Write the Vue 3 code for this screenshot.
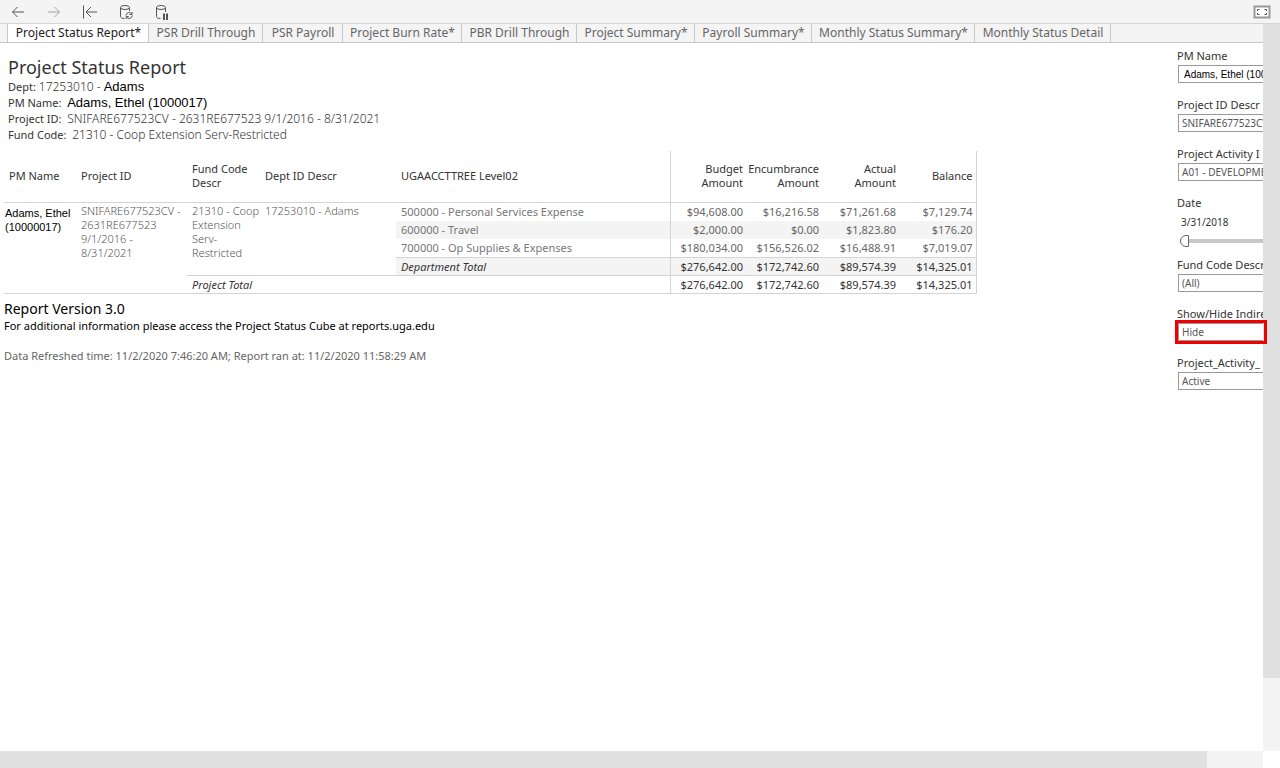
<script setup>
import { ref } from 'vue'

const tabs = [
  'Project Status Report*', 'PSR Drill Through', 'PSR Payroll', 'Project Burn Rate*',
  'PBR Drill Through', 'Project Summary*', 'Payroll Summary*', 'Monthly Status Summary*',
  'Monthly Status Detail',
]
const active = ref(0)
const date = ref(0)

const rows = [
  { name: '600000 - Travel', band: true, v: ['$2,000.00', '$0.00', '$1,823.80', '$176.20'] },
  { name: '700000 - Op Supplies & Expenses', v: ['$180,034.00', '$156,526.02', '$16,488.91', '$7,019.07'] },
]
const first = ['$94,608.00', '$16,216.58', '$71,261.68', '$7,129.74']
const totals = ['$276,642.00', '$172,742.60', '$89,574.39', '$14,325.01']

const filters = [
  { id: 'pm', label: 'PM Name', value: 'Adams, Ethel (1000017)', person: true },
  { id: 'project', label: 'Project ID Descr', value: 'SNIFARE677523CV' },
  { id: 'activity', label: 'Project Activity I', value: 'A01 - DEVELOPMENT' },
  { id: 'date', label: 'Date', slider: true },
  { id: 'fund', label: 'Fund Code Descr', value: '(All)' },
  { id: 'indirect', label: 'Show/Hide Indire', value: 'Hide', marked: true },
  { id: 'status', label: 'Project_Activity_', value: 'Active' },
]
</script>

<template>
  <div class="viewer">
    <header class="toolbar">
      <button aria-label="Undo"><svg width="16" height="16" viewBox="0 0 16 16"><path d="M14 8H2.500M7.500 3 2.500 8l5 5" /></svg></button>
      <button aria-label="Redo" class="faded"><svg width="16" height="16" viewBox="0 0 16 16"><path d="M2 8h11.500M8.500 3l5 5-5 5" /></svg></button>
      <button aria-label="Revert"><svg width="16" height="16" viewBox="0 0 16 16"><path d="M1.500 1.500v13M15 8H4M9 3 4 8l5 5" /></svg></button>
      <button aria-label="Refresh"><svg width="16" height="16" viewBox="0 0 16 16"><ellipse cx="7" cy="3.500" rx="4.500" ry="2" /><path d="M2.500 3.500v9c0 1.200 1.600 2 4 2M11.500 3.500V7M8 11.500a3.200 3.200 0 0 1 5.800-1.600M14 8v2.500h-2.500M14.300 11.500a3.200 3.200 0 0 1-5.800 1.600M8.200 15v-2.500h2.500" /></svg></button>
      <button aria-label="Pause"><svg width="16" height="16" viewBox="0 0 16 16"><ellipse cx="7" cy="3.500" rx="4.500" ry="2" /><path d="M2.500 3.500v9c0 1.200 1.600 2 4 2M11.500 3.500V8" /><path class="bars" d="M10 9.500V16M13 9.500V16" /></svg></button>
      <button aria-label="Full screen" class="full"><svg width="18" height="14" viewBox="0 0 18 14"><rect class="frame" x="1.500" y="1.500" width="15" height="11" /><path d="M4.500 6V4.500H6.500M11.500 4.500h2V6M13.500 8v1.500h-2M6.500 9.500h-2V8" /></svg></button>
    </header>

    <div class="stage">
      <nav class="tabs">
        <button v-for="(t, i) in tabs" :key="t" :class="{ on: i === active }" @click="active = i">{{ t }}</button>
      </nav>

      <div class="dashboard">
        <main class="report">
          <section class="intro">
            <h1>Project Status Report</h1>
            <p>Dept: <span class="code">17253010 - </span> <span class="person">Adams</span></p>
            <p>PM Name: &nbsp;<span class="person">Adams, Ethel (1000017)</span></p>
            <p>Project ID: &nbsp;<span class="code">SNIFARE677523CV - 2631RE677523 9/1/2016 - 8/31/2021</span></p>
            <p>Fund Code: &nbsp;<span class="code">21310 - Coop Extension Serv-Restricted</span></p>
          </section>

          <table>
            <colgroup>
              <col class="c-pm"><col class="c-project"><col class="c-fund"><col class="c-dept"><col class="c-tree">
              <col class="c-num"><col class="c-slim"><col class="c-num"><col class="c-slim">
            </colgroup>
            <thead>
              <tr>
                <th>PM Name</th><th>Project ID</th><th>Fund Code Descr</th><th>Dept ID Descr</th>
                <th>UGAACCTTREE Level02</th>
                <th class="num start">Budget Amount</th><th class="num">Encumbrance Amount</th>
                <th class="num">Actual<br>Amount</th><th class="num end">Balance</th>
              </tr>
            </thead>
            <tbody>
              <tr>
                <td rowspan="5" class="pm">Adams, Ethel (10000017)</td>
                <td rowspan="5" class="wrap">SNIFARE677523CV - 2631RE677523 9/1/2016 - 8/31/2021</td>
                <td rowspan="4" class="wrap">21310 - Coop Extension Serv-Restricted</td>
                <td rowspan="4" class="wrap">17253010 - Adams</td>
                <td>500000 - Personal Services Expense</td>
                <td v-for="(v, i) in first" :key="i" class="num" :class="{ start: i === 0, end: i === 3 }">{{ v }}</td>
              </tr>
              <tr v-for="r in rows" :key="r.name" :class="{ band: r.band }">
                <td>{{ r.name }}</td>
                <td v-for="(v, i) in r.v" :key="i" class="num" :class="{ start: i === 0, end: i === 3 }">{{ v }}</td>
              </tr>
              <tr class="band total">
                <td>Department Total</td>
                <td v-for="(v, i) in totals" :key="i" class="num" :class="{ start: i === 0, end: i === 3 }">{{ v }}</td>
              </tr>
              <tr class="total">
                <td colspan="3">Project Total</td>
                <td v-for="(v, i) in totals" :key="i" class="num" :class="{ start: i === 0, end: i === 3 }">{{ v }}</td>
              </tr>
            </tbody>
          </table>

          <footer>
            <h2>Report Version 3.0</h2>
            <p>For additional information please access the Project Status Cube at reports.uga.edu</p>
            <p class="stamp">Data Refreshed time: 11/2/2020 7:46:20 AM; Report ran at: 11/2/2020 11:58:29 AM</p>
          </footer>
        </main>

        <aside class="filters">
          <div v-for="f in filters" :key="f.id" class="field" :class="{ marked: f.marked, dated: f.slider }">
            <label :for="f.id">{{ f.label }}</label>
            <template v-if="f.slider">
              <output :for="f.id">3/31/2018</output>
              <input :id="f.id" v-model="date" type="range" min="0" max="100">
            </template>
            <select v-else :id="f.id" :class="{ named: f.person }"><option>{{ f.value }}</option></select>
          </div>
        </aside>
      </div>
    </div>

    <div class="vbar"><div class="thumb"></div></div>
    <div class="hbar"><div class="thumb"></div></div>
  </div>
</template>

<style>
body { margin: 0; background: #fff; }
</style>

<style scoped>
.viewer {
  display: grid;
  grid-template: auto 1fr 17px / minmax(0, 1fr) 17px;
  height: 100vh;
  overflow: hidden;
  font-family: "Noto Sans", "Open Sans", sans-serif;
  font-size: 11px;
  color: #333;
}
button { border: 0; background: none; padding: 0; font: inherit; color: inherit; }
h1, h2, p { margin: 0; font-weight: 400; }

.toolbar {
  grid-column: 1 / 3;
  display: flex;
  align-items: center;
  gap: 20px;
  height: 23px;
  padding: 0 9px 0 10px;
  background: #f4f4f4;
  border-bottom: 1px solid #d4d4d4;
}
.toolbar button { display: flex; }
.toolbar svg { fill: none; stroke: #555; stroke-width: 1; }
.toolbar .faded { opacity: 0.5; }
.toolbar .bars { stroke-width: 2; }
.toolbar .full { margin-left: auto; }
.toolbar .frame { fill: #fff; stroke: #999; stroke-width: 2; }

.stage { min-width: 0; }
.tabs {
  display: grid;
  grid-template-columns: 142px 114px 80px 119px 115px 118px 117px 163px 136px;
  height: 18px;
  padding-left: 7px;
  background: #f4f4f4;
  border-bottom: 1px solid #c8c8c8;
  font-size: 12px;
  color: #666;
}
.tabs button {
  padding-left: 1px;
  border-right: 1px solid #c8c8c8;
  line-height: 16px;
  white-space: nowrap;
}
.tabs .on { background: #fff; color: #222; border-left: 1px solid #c8c8c8; }

.dashboard { display: flex; }
.report { flex: 1; min-width: 0; padding: 13px 0 0 4px; }
.intro { padding-left: 4px; line-height: 16px; }
.intro h1 { font-size: 18px; line-height: 23px; }
.intro .code { font-size: 12px; font-weight: 300; }
.intro .person { font: 13px/16px "Liberation Sans", Arial, sans-serif; color: #000; }

table {
  width: 972px;
  margin-top: 8px;
  table-layout: fixed;
  border-collapse: collapse;
  border-bottom: 1px solid #d4d4d4;
  line-height: 14px;
}
.c-pm { width: 72px; }
.c-project { width: 111px; }
.c-fund { width: 73px; }
.c-dept { width: 136px; }
.c-tree { width: 274px; }
.c-num { width: 77px; }
.c-slim { width: 76px; }
th, td { padding: 0 4px 0 5px; text-align: left; font-weight: 400; }
th { height: 49px; padding-bottom: 2px; border-bottom: 1px solid #d4d4d4; }
td { height: 17px; padding-bottom: 1px; color: #777; white-space: nowrap; }
td.wrap, td.pm { padding-top: 1px; vertical-align: top; white-space: normal; }
td.wrap { padding-right: 0; font-weight: 300; color: #555; }
td.pm { padding: 3px 0 0 1px; font: 11px/14px "Liberation Sans", Arial, sans-serif; color: #000; }
th.num, td.num { padding-left: 0; padding-right: 4px; text-align: right; }
th.end, td.end { padding-right: 3px; }
td.num { color: #666; }
.start { border-left: 1px solid #d4d4d4; }
.end { border-right: 1px solid #d4d4d4; }
.band td:not([rowspan]) { background: #f4f4f4; }
.total td, .total td.num { padding-bottom: 0; border-top: 1px solid #d4d4d4; color: #333; }
.total td:first-child { font-style: italic; }

footer { padding-top: 6px; line-height: 16px; color: #000; }
footer h2 { font-size: 14px; line-height: 18px; }
footer .stamp { margin-top: 14px; color: #666; }

.filters {
  flex: 0 0 86px;
  min-width: 0;
  padding-top: 5px;
}
.field { position: relative; display: flex; flex-direction: column; width: 160px; margin-bottom: 14px; }
.field.dated { margin-bottom: 10px; }
.field label { line-height: 16px; white-space: nowrap; }
.field select {
  appearance: none;
  height: 18px;
  margin: 1px 0 0 1px;
  padding: 0 3px;
  border: 1px solid #999;
  border-radius: 0;
  background: #fff;
  font: 10px "Noto Sans", sans-serif;
  color: #555;
}
.field select.named { padding-left: 5px; font-family: "Liberation Sans", Arial, sans-serif; color: #000; }
.field output { padding: 4px 0 0 4px; font-size: 10px; line-height: 14px; }
.field input {
  appearance: none;
  height: 12px;
  margin: 6px 0 0 3px;
  background: linear-gradient(#c8c8c8, #c8c8c8) 0 50% / 100% 4px no-repeat;
}
.field input::-webkit-slider-thumb {
  appearance: none;
  box-sizing: border-box;
  width: 9px;
  height: 12px;
  border: 1px solid #666;
  border-radius: 6px 0 0 6px;
  background: #fff;
}
.marked::after {
  content: "";
  position: absolute;
  z-index: 2;
  left: -2px;
  bottom: -3px;
  box-sizing: border-box;
  width: 92px;
  height: 24px;
  border: 3px solid #f00000;
}

.vbar { z-index: 1; background: #f4f4f4; }
.hbar { z-index: 1; background: #f4f4f4; }
.thumb { background: #e0e0e0; }
.vbar .thumb { height: 90%; }
.hbar .thumb { width: 95.6%; height: 100%; }
</style>
